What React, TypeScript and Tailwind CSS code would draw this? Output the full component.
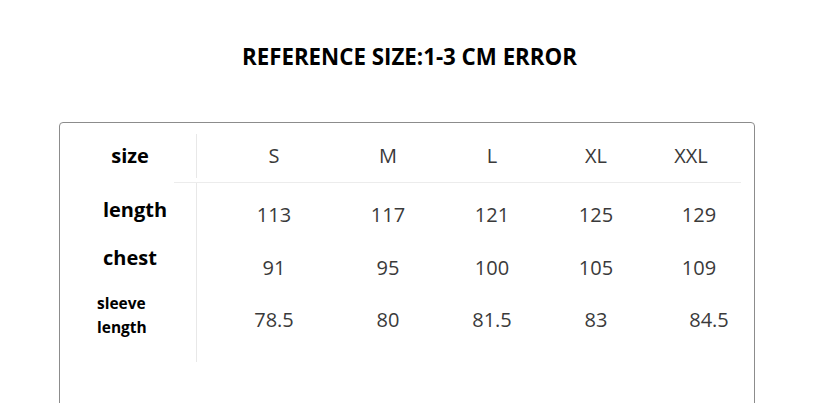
const sizes = ['S', 'M', 'L', 'XL', 'XXL'];

const rows = [
  { label: 'length', values: ['113', '117', '121', '125', '129'], last: 'pl-[10px]' },
  { label: 'chest', values: ['91', '95', '100', '105', '109'], last: 'pl-[10px]' },
  { label: 'sleeve length', values: ['78.5', '80', '81.5', '83', '84.5'], last: 'pl-[30px]' },
];

// column widths picked so each value centres under its size
const colWidths = ['w-[114px]', 'w-[114px]', 'w-[94px]', 'w-[114px]', 'w-[82px]'];

export default function App() {
  return (
    <div
      className="h-[403px] w-[821px] overflow-hidden bg-white"
      style={{ fontFamily: '"Open Sans", "Liberation Sans", sans-serif' }}
    >
      <h1 className="pr-[2px] pt-[43px] text-center text-[22.3px] font-bold leading-[28px] text-black">
        REFERENCE SIZE:1-3 CM ERROR
      </h1>

      <div className="ml-[59px] mt-[51px] h-[320px] w-[696px] rounded-[4px] border border-[#8c8c8c] pt-[11px]">
        {/* header */}
        <div className="flex h-[48px] pb-[4px]">
          <div className="flex w-[136px] items-center justify-center pl-[4px] text-[20px] font-bold text-black">
            size
          </div>
          <div className="flex items-center border-l border-[#e8e8e8] pl-[20px]">
            {sizes.map((s, i) => (
              <div
                key={s}
                className={`${colWidths[i]} ${i === 4 ? 'pr-[6px]' : ''} text-center text-[20px] text-[#3a3a3a]`}
              >
                {s}
              </div>
            ))}
          </div>
        </div>

        <div className="ml-[114px] h-px w-[567px] bg-[#ececec]" />

        <div className="flex">
          <div className="w-[136px] pt-[2px] text-black">
            <div className="flex h-[54px] items-start justify-center pl-[14px] pt-[10px] text-[20px] font-bold">
              length
            </div>
            <div className="flex h-[52px] items-start justify-center pl-[4px] pt-[4px] text-[20px] font-bold">
              chest
            </div>
            <div className="flex h-[52px] flex-col pl-[37px] text-[15.5px] font-bold leading-[24px]">
              <span>sleeve</span>
              <span>length</span>
            </div>
          </div>

          <div className="border-l border-[#e8e8e8] pb-[16px] pl-[20px] pt-[5px]">
            {rows.map((r) => (
              <div key={r.label} className="flex h-[52px] items-center first:h-[54px]">
                {r.values.map((v, i) => (
                  <div
                    key={i}
                    className={`${colWidths[i]} ${i === 4 ? r.last : ''} text-center text-[20px] text-[#3a3a3a]`}
                  >
                    {v}
                  </div>
                ))}
              </div>
            ))}
          </div>
        </div>
      </div>
    </div>
  );
}
